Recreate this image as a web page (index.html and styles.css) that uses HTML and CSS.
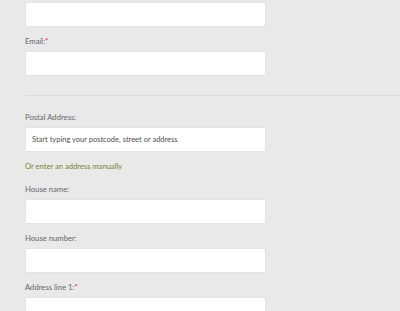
FILE: index.html
```html
<!DOCTYPE html>
<html>
<head>
<meta charset="utf-8">
<link rel="stylesheet" href="styles.css">
</head>
<body>
<form class="form">
  <div class="field">
    <input class="input" type="text">
  </div>
  <div class="field">
    <label class="label">Email:<span class="req">*</span></label>
    <input class="input" type="text">
  </div>
  <hr class="divider">
  <div class="field">
    <label class="label">Postal Address:</label>
    <input class="input" type="text" placeholder="Start typing your postcode, street or address">
  </div>
  <a class="manual" href="#">Or enter an address manually</a>
  <div class="field">
    <label class="label">House name:</label>
    <input class="input" type="text">
  </div>
  <div class="field">
    <label class="label">House number:</label>
    <input class="input" type="text">
  </div>
  <div class="field">
    <label class="label">Address line 1:<span class="req">*</span></label>
    <input class="input" type="text">
  </div>
</form>
</body>
</html>
```
FILE: styles.css
```css
html, body {
  margin: 0;
  padding: 0;
  background: #e9e9e9;
  overflow: hidden;
}
.form {
  padding: 2px 0 0 25px;
  font-family: Lato, "Open Sans", sans-serif;
}
.field {
  display: flex;
  flex-direction: column;
  align-items: flex-start;
  margin-bottom: 8px;
}
.label {
  display: block;
  height: 12px;
  line-height: 12px;
  font-size: 7.7px;
  color: #66686c;
  margin-bottom: 4px;
}
.req {
  color: #d8323f;
}
.input {
  box-sizing: border-box;
  width: 241px;
  height: 25px;
  margin: 0;
  background: #fff;
  border: 1px solid #e3e3e3;
  border-radius: 2px;
  padding: 0 6px;
  font-family: Lato, "Open Sans", sans-serif;
  font-size: 7.5px;
  color: #444;
  outline: none;
}
.input::placeholder {
  color: #4f4f4f;
  opacity: 1;
}
.divider {
  border: 0;
  border-top: 1px solid #dcdcdc;
  margin: 19px 0 15px 0;
  height: 0;
}
.manual {
  display: block;
  height: 12px;
  line-height: 12px;
  font-size: 7.6px;
  color: #77843a;
  text-decoration: none;
  margin: 0 0 11px 0;
}
```
